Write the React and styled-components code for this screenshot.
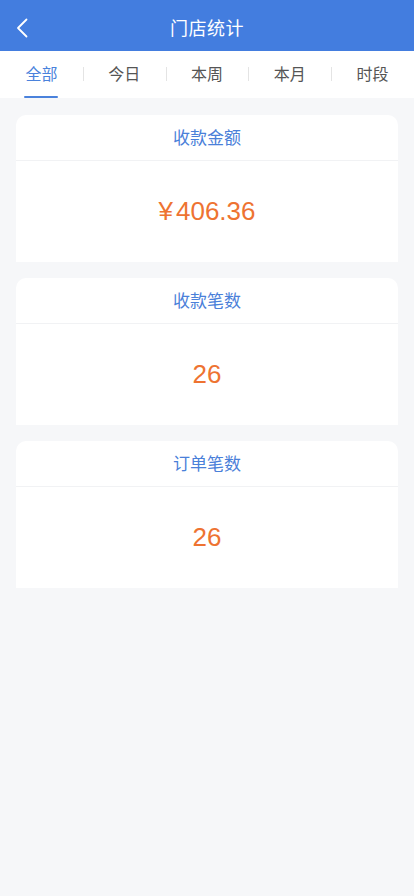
import styled, { createGlobalStyle } from "styled-components";
import { useState } from "react";

const GlobalStyle = createGlobalStyle`
    html, body {
        margin: 0;
        padding: 0;
        background: #f6f7f9;
    }
    body {
        font-family: "Noto Sans CJK SC", "Noto Sans", sans-serif;
    }
    * {
        box-sizing: border-box;
    }
`;

const tabs = ["全部", "今日", "本周", "本月", "时段"];

const stats = [
    { title: "收款金额", value: "406.36", money: true },
    { title: "收款笔数", value: "26" },
    { title: "订单笔数", value: "26" },
];

export default function App() {
    const [active, setActive] = useState(0);

    return (
        <Page>
            <GlobalStyle />
            <NavBar>
                <BackButton>
                    <svg width="12" height="20" viewBox="0 0 12 20" fill="none">
                        <path d="M10.5 1.5 L2 10 L10.5 18.5" stroke="#fff" strokeWidth="1.8" strokeLinecap="round" strokeLinejoin="round" />
                    </svg>
                </BackButton>
                <Title>门店统计</Title>
            </NavBar>

            <TabBar>
                {tabs.map((t, i) => (
                    <Tab key={t} active={i === active} first={i === 0} onClick={() => setActive(i)}>
                        <span>{t}</span>
                    </Tab>
                ))}
            </TabBar>

            <List>
                {stats.map((s) => (
                    <Card key={s.title}>
                        <CardHead>{s.title}</CardHead>
                        <CardBody>
                            {s.money && <Yen>¥</Yen>}
                            {s.value}
                        </CardBody>
                    </Card>
                ))}
            </List>
        </Page>
    );
}

const Page = styled.div`
    min-height: 896px;
    background: #f6f7f9;
`;

const NavBar = styled.div`
    position: relative;
    height: 51px;
    background: #437ddf;
    display: flex;
    align-items: center;
    justify-content: center;
    padding-top: 2px;
`;

const BackButton = styled.div`
    position: absolute;
    left: 16px;
    top: 18px;
    width: 12px;
    height: 20px;
    display: flex;
`;

const Title = styled.h1`
    margin: 0;
    font-size: 18px;
    font-weight: 400;
    color: #ffffff;
    letter-spacing: 0.5px;
`;

const TabBar = styled.div`
    height: 47px;
    background: #ffffff;
    display: flex;
`;

const Tab = styled.div`
    flex: 1;
    display: flex;
    justify-content: center;
    align-items: center;
    position: relative;
    font-size: 16px;
    color: ${(p) => (p.active ? "#4a82dc" : "#555555")};
    cursor: pointer;

    span {
        position: relative;
        height: 100%;
        display: flex;
        align-items: center;
        padding-bottom: 4px;
    }

    span::after {
        content: "";
        display: ${(p) => (p.active ? "block" : "none")};
        position: absolute;
        left: -1px;
        right: -1px;
        bottom: 0;
        height: 2px;
        border-radius: 1px;
        background: #4a82dc;
    }

    &::before {
        content: "";
        display: ${(p) => (p.first ? "none" : "block")};
        position: absolute;
        left: 0;
        top: 16px;
        width: 1px;
        height: 14px;
        background: #e4e4e4;
    }
`;

const List = styled.div`
    padding: 17px 16px;
    display: flex;
    flex-direction: column;
    gap: 16px;
`;

const Card = styled.div`
    background: #ffffff;
    border-radius: 10px 10px 0 0;
    overflow: hidden;
`;

const CardHead = styled.div`
    height: 46px;
    display: flex;
    align-items: center;
    justify-content: center;
    padding-bottom: 2px;
    font-size: 17px;
    color: #4a80d9;
    border-bottom: 1px solid #f1f2f4;
`;

const CardBody = styled.div`
    height: 101px;
    display: flex;
    align-items: center;
    justify-content: center;
    font-family: "Liberation Sans", "Noto Sans", sans-serif;
    font-size: 26px;
    color: #ee7331;
`;

const Yen = styled.span`
    margin-right: 3px;
`;
